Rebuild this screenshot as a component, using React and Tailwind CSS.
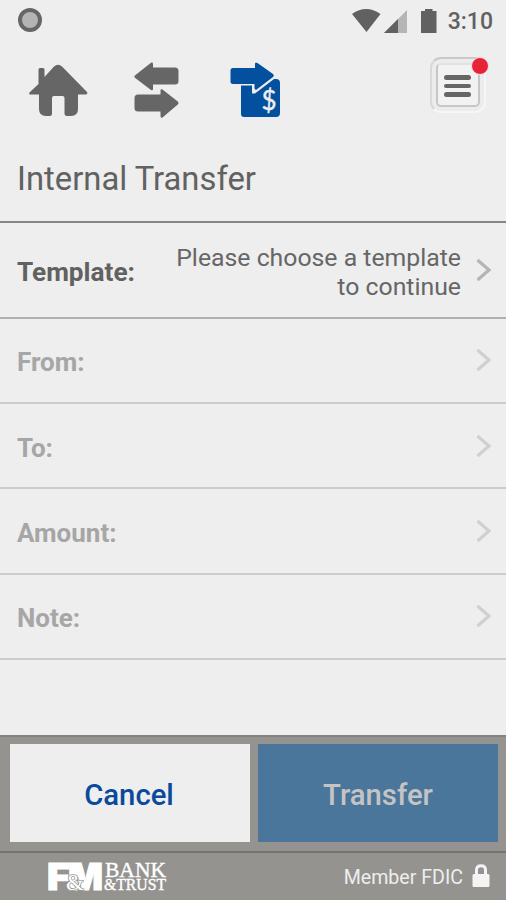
const HomeIcon = () => (
    <svg width="60" height="54" viewBox="0 0 60 54" fill="#666666">
        <path d="M1.500 28.500 L10.500 20 V5.500 Q10.500 4 12 4 H15 Q16.500 4 16.500 5.500 V13 L26 2.500 Q30 -1 34 2.500 L59 28 Q60 30 58 30.500 H50 V45 Q50 52 43 52 H39 Q36.500 52 36.500 49.500 V34 Q36.500 32 34.500 32 H26 Q24 32 24 34 V49.500 Q24 52 21.500 52 H18 Q11 52 11 45 V30.500 H2 Q0.500 30.500 1.500 28.500 Z" />
    </svg>
);

const SwapIcon = () => (
    <svg width="46" height="58" viewBox="0 0 46 58" fill="#666666">
        <path d="M1.200 13.200 L17 0.800 Q19 0 19 2 V5.500 H41 Q44.500 5.500 44.500 9 V19 Q44.500 22.500 41 22.500 H19 V27 Q19 29 17 28 L1.200 16 Q-0.500 14.500 1.200 13.200 Z" />
        <path d="M43.800 39.500 L28.500 27.500 Q26.500 26.500 26.500 28.500 V32.500 H4 Q0.500 32.500 0.500 36 V46 Q0.500 49.500 4 49.500 H26.500 V54 Q26.500 56.500 28.500 55.500 L43.800 42.500 Q45.500 41 43.800 39.500 Z" />
    </svg>
);

const PayIcon = () => (
    <svg width="52" height="58" viewBox="0 0 52 58">
        <path d="M11 23.500 H22 V31.500 H25 L44 17 H46 Q50 17 50 21 V51 Q50 55 46 55 H14 Q11 55 11 52 Z" fill="#03509f" />
        <path d="M3 6 H25 V2 Q25 -0.500 27.500 1 L43 12 Q44.500 13.500 43 15 L26 28 L24.500 26.500 V22 H3 Q0.500 22 0.500 19.500 V8.500 Q0.500 6 3 6 Z" fill="#03509f" />
        <text x="31.500" y="47.500" fontSize="26" fontFamily="Lato, sans-serif" fill="#eeeeee" stroke="#eeeeee" strokeWidth="0.4">$</text>
    </svg>
);

const Chevron = ({ color }) => (
    <svg width="16" height="24" viewBox="0 0 16 24" fill="none" stroke={color} strokeWidth="3.200">
        <path d="M1.500 2 L13 12 L1.500 22" />
    </svg>
);

const StatusBar = () => (
    <div className="flex h-10 items-center justify-between pr-[13px] pl-[18px]">
        <div className="h-6 w-6 rounded-full border-[4px] border-[#666666] bg-[#b4b4b4]"></div>
        <div className="flex items-center">
            <svg width="86" height="26" viewBox="0 0 86 26" fill="#616161">
                <path d="M0 7 Q14 -3 28.500 7 L14.500 25 Z" />
                <path d="M55 3 V26 H32 Z" fill="#b5b5b5" />
                <path d="M46 12 V26 H32 Z" />
                <path d="M69 4 H73 V2 H80.500 V4 H84.500 V26 H69 Z" />
            </svg>
            <span className="ml-[10px] pt-[3px] text-[23px] leading-none font-medium text-[#616161]">3:10</span>
        </div>
    </div>
);

const NavBar = () => (
    <div className="flex h-[94px] items-start justify-between pr-[17px] pl-[28px]">
        <div className="flex items-start">
            <div className="pt-6"><HomeIcon /></div>
            <div className="ml-[46px] pt-[22px]"><SwapIcon /></div>
            <div className="ml-[50px] pt-[22px]"><PayIcon /></div>
        </div>
        <div className="relative mt-[17px] h-[56px] w-[59px]">
            <div className="h-[56px] w-[56px] rounded-[11px] border-2 border-[#f6f6f6] border-t-[#c9c9c9] border-l-[#d8d8d8] bg-[#ececec] pt-[4px] pl-[4px]">
                <div className="flex h-[44px] w-[44px] flex-col items-center justify-center gap-[4px] rounded-[5px] border-2 border-[#c7c7c7] border-t-[#e2e2e2] bg-[#f2f2f2] pt-[2px] pr-[2px]">
                    <div className="h-[4.500px] w-[27px] rounded-full bg-[#666666]"></div>
                    <div className="h-[4.500px] w-[27px] rounded-full bg-[#666666]"></div>
                    <div className="h-[4.500px] w-[27px] rounded-full bg-[#666666]"></div>
                </div>
            </div>
            <div className="absolute top-0 right-0 h-[18px] w-[18px] rounded-full border border-[#f6e4e5] bg-[#e62436]"></div>
        </div>
    </div>
);

const App = () => {
    const fields = ["From:", "To:", "Amount:", "Note:"];

    return (
        <div className="flex h-[900px] w-[506px] flex-col overflow-hidden bg-[#eeeeee] font-['Roboto',sans-serif]">
            <StatusBar />
            <NavBar />

            <div className="flex h-[89px] items-center border-b-2 border-[#858585] pl-[17px]">
                <h1 className="pt-[4px] text-[32.800px] text-[#616161]">Internal Transfer</h1>
            </div>

            <div className="flex h-[95.800px] items-center border-b-2 border-[#b0b0b0] pr-[14px] pl-[17px]">
                <span className="pt-[5px] text-[26.200px] font-bold text-[#616161]">Template:</span>
                <p className="ml-auto w-[300px] pt-[4px] text-right text-[24.800px] leading-[29px] text-[#666666]">Please choose a template to continue</p>
                <div className="ml-[15px]"><Chevron color="#b5b5b5" /></div>
            </div>

            {fields.map((label) => (
                <div key={label} className="flex h-[85.300px] items-center justify-between border-b-2 border-[#cccccc] pr-[14px] pl-[17px]">
                    <span className="pt-[5px] text-[26px] font-bold text-[#a6a6a6]">{label}</span>
                    <Chevron color="#d0d0d0" />
                </div>
            ))}

            <div className="mt-auto flex h-[116px] gap-2 border-t-2 border-[#84837f] bg-[#949390] pt-[7px] pr-[8px] pl-[10px]">
                <button className="h-[98px] w-[240px] bg-[#eeeeee] pt-[5px] pr-[2px] text-[29.300px] font-medium text-[#0a4a9c]">Cancel</button>
                <button className="h-[98px] w-[240px] bg-[#4b769b] pt-[5px] text-[29.300px] font-medium text-[#c4c4c4]">Transfer</button>
            </div>

            <div className="flex h-[49px] items-center justify-between border-t-2 border-[#74736f] bg-[#949390] pr-4 pl-[48px]">
                <svg width="120" height="47" viewBox="0 -8 120 47" fill="#ffffff">
                    <text x="-1" y="28.500" fontSize="37" fontWeight="900" fontFamily="Inter, sans-serif" textLength="23" lengthAdjust="spacingAndGlyphs" stroke="#ffffff">F</text>
                    <text x="20" y="28.500" fontSize="37" fontWeight="900" fontFamily="Inter, sans-serif" textLength="35" lengthAdjust="spacingAndGlyphs" stroke="#ffffff">M</text>
                    <text x="18" y="28.500" fontSize="23" fontFamily="Liberation Serif, serif" stroke="#949390" strokeWidth="1.500" paintOrder="stroke">&amp;</text>
                    <text x="57" y="15.500" fontSize="22" fontFamily="Liberation Serif, serif" textLength="61" lengthAdjust="spacingAndGlyphs" stroke="#ffffff" strokeWidth="0.4">BANK</text>
                    <text x="56" y="28.500" fontSize="16" fontFamily="Liberation Serif, serif" textLength="62" lengthAdjust="spacingAndGlyphs" stroke="#ffffff" strokeWidth="0.4">&amp;TRUST</text>
                </svg>
                <div className="flex items-center">
                    <span className="pt-[2px] text-[19.600px] text-[#eeeeee]">Member FDIC</span>
                    <svg className="ml-[9px]" width="18" height="24" viewBox="0 0 18 24">
                        <path d="M4.500 11 V6 Q4.500 1.800 9 1.800 Q13.500 1.800 13.500 6 V11" fill="none" stroke="#f4f4f4" strokeWidth="3" />
                        <rect x="0.500" y="10" width="17" height="13" rx="1.500" fill="#f4f4f4" />
                    </svg>
                </div>
            </div>
        </div>
    );
};

export default App;
